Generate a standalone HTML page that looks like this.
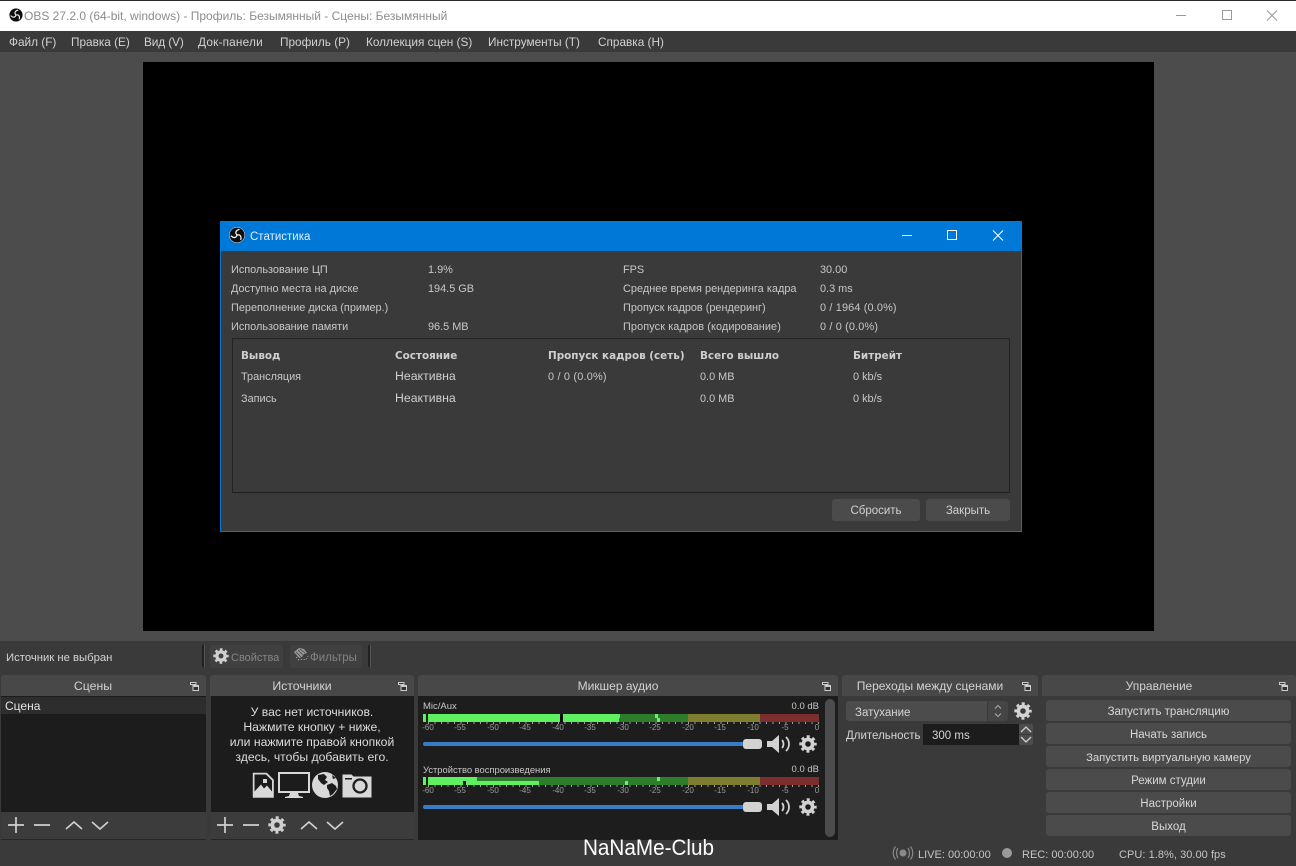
<!DOCTYPE html>
<html lang="ru"><head><meta charset="utf-8"><title>OBS 27.2.0</title>
<style>
html,body{margin:0;padding:0;width:1296px;height:866px;overflow:hidden;background:#3a3a3a}
body{position:relative;font-family:"Liberation Sans","Noto Sans CJK SC",sans-serif;font-size:12px;color:#d2d2d2}
.a{position:absolute}
.t{position:absolute;white-space:nowrap;line-height:16px;height:16px}
.c{transform:translateX(-50%)}
.title{position:absolute;top:675px;height:21px;background:#484848;border-radius:3px 3px 0 0}
.btn{position:absolute;left:1046px;width:245px;height:21px;background:#4b4b4b;border-radius:3px;text-align:center;line-height:23px;padding-top:0;color:#d8d8d8;font-size:11.5px}
.btn span{position:relative;top:1px}
.m{position:absolute;font-size:8px;color:#9c9c9c;line-height:10px;transform:translateX(-50%);white-space:nowrap}
svg{position:absolute;overflow:visible}
.b{font-family:"DejaVu Sans",sans-serif;font-weight:bold;font-size:10.4px;color:#cfcfcf}
.s{font-size:10.9px;color:#c8c8c8}
.mn{top:34px;font-size:11.8px}
.seg{position:absolute;height:3.5px}
</style></head><body>
<svg width="0" height="0" style="position:absolute"><defs>
<symbol id="gear" viewBox="0 0 24 24"><circle cx="12" cy="12" r="6.2" fill="none" stroke="currentColor" stroke-width="5"/><circle cx="12" cy="12" r="9.6" fill="none" stroke="currentColor" stroke-width="4" stroke-dasharray="3.9 3.64" stroke-dashoffset="1.95"/></symbol>
<symbol id="float" viewBox="0 0 9 9"><path d="M.5.5h5.5v2H.5zM3 3.5h5.5v5H3z" fill="#333" stroke="#ccc" stroke-width="1"/><path d="M3 4h5.5v1H3z" fill="#ccc"/></symbol>
<symbol id="logo" viewBox="0 0 32 32"><circle cx="16" cy="16" r="15.500" fill="#0e0e0e" stroke="#e8e8e8" stroke-width="1"/>
<g fill="none" stroke="#f0f0f0" stroke-width="2.600" stroke-linecap="round"><path d="M16 16C12 12 13 7 20 5"/><path d="M16 16C12 12 13 7 20 5" transform="rotate(120 16 16)"/><path d="M16 16C12 12 13 7 20 5" transform="rotate(240 16 16)"/></g></symbol>
</defs></svg>

<!-- title bar -->
<div class="a" style="left:0;top:0;width:1296px;height:1px;background:#2a2a2a"></div>
<div class="a" style="left:0;top:1px;width:1296px;height:30px;background:#fff"></div>
<svg style="left:9px;top:8px" width="14" height="14"><use href="#logo" width="14" height="14"/></svg>
<div class="t" style="left:24px;top:8px;color:#8c8c8c;font-size:12px">OBS 27.2.0 (64-bit, windows) - Профиль: Безымянный - Сцены: Безымянный</div>
<svg style="left:1176px;top:10px" width="100" height="12" fill="none" stroke="#999" stroke-width="1"><path d="M0 5.500h10M46.500 .5h9v9h-9zM91 .5l10 10M101 .5l-10 10"/></svg>

<!-- menu -->
<div class="a" style="left:0;top:31px;width:1296px;height:21px;background:#3a3a3a"></div>
<div class="t mn" style="left:9px">Файл (F)</div>
<div class="t mn" style="left:71px">Правка (E)</div>
<div class="t mn" style="left:144px;letter-spacing:-.1px">Вид (V)</div>
<div class="t mn" style="left:198px;letter-spacing:.2px">Док-панели</div>
<div class="t mn" style="left:280px">Профиль (P)</div>
<div class="t mn" style="left:366px">Коллекция сцен (S)</div>
<div class="t mn" style="left:488px">Инструменты (T)</div>
<div class="t mn" style="left:598px">Справка (H)</div>

<!-- main -->
<div class="a" style="left:0;top:52px;width:1296px;height:590px;background:#4c4c4c"></div>
<div class="a" style="left:143px;top:62px;width:1011px;height:569px;background:#000"></div>

<!-- stats dialog -->
<div class="a" style="left:220px;top:221px;width:800px;height:309px;background:#3a3a3a;border:1px solid #0078d7"></div>
<div class="a" style="left:220px;top:221px;width:802px;height:30px;background:#0078d7"></div>
<svg style="left:229px;top:227px" width="16" height="16"><use href="#logo" width="16" height="16"/></svg>
<div class="t" style="left:250px;top:229px;color:#e4eefa;font-size:11.5px">Статистика</div>
<svg style="left:902px;top:230px" width="102" height="12" fill="none" stroke="#fff" stroke-width="1"><path d="M0 5.500h10M45.500 .5h9v9h-9zM91 .5l10 10M101 .5l-10 10"/></svg>

<div class="t s" style="left:231px;top:262px">Использование ЦП</div>
<div class="t s" style="left:428px;top:262px">1.9%</div>
<div class="t s" style="left:231px;top:281px">Доступно места на диске</div>
<div class="t s" style="left:428px;top:281px">194.5 GB</div>
<div class="t s" style="left:231px;top:300px">Переполнение диска (пример.)</div>
<div class="t s" style="left:231px;top:319px">Использование памяти</div>
<div class="t s" style="left:428px;top:319px">96.5 MB</div>
<div class="t s" style="left:623px;top:262px">FPS</div>
<div class="t s" style="left:820px;top:262px">30.00</div>
<div class="t s" style="left:623px;top:281px;letter-spacing:.03px">Среднее время рендеринга кадра</div>
<div class="t s" style="left:820px;top:281px">0.3 ms</div>
<div class="t s" style="left:623px;top:300px">Пропуск кадров (рендеринг)</div>
<div class="t s" style="left:820px;top:300px;letter-spacing:.15px">0 / 1964 (0.0%)</div>
<div class="t s" style="left:623px;top:319px;letter-spacing:.1px">Пропуск кадров (кодирование)</div>
<div class="t s" style="left:820px;top:319px;letter-spacing:.15px">0 / 0 (0.0%)</div>

<div class="a" style="left:232px;top:338px;width:776px;height:153px;border:1px solid #232323;border-bottom-color:#1e1e1e"></div>
<div class="t b" style="left:241px;top:348px">Вывод</div>
<div class="t b" style="left:395px;top:348px">Состояние</div>
<div class="t b" style="left:548px;top:348px">Пропуск кадров (сеть)</div>
<div class="t b" style="left:700px;top:348px">Всего вышло</div>
<div class="t b" style="left:853px;top:348px">Битрейт</div>
<div class="t s" style="left:241px;top:369px">Трансляция</div>
<div class="t" style="left:395px;top:368px;font-size:12.3px;color:#cfcfcf">Неактивна</div>
<div class="t s" style="left:548px;top:369px;letter-spacing:.2px">0 / 0 (0.0%)</div>
<div class="t s" style="left:700px;top:369px">0.0 MB</div>
<div class="t s" style="left:853px;top:369px">0 kb/s</div>
<div class="t s" style="left:241px;top:391px">Запись</div>
<div class="t" style="left:395px;top:390px;font-size:12.3px;color:#cfcfcf">Неактивна</div>
<div class="t s" style="left:700px;top:391px">0.0 MB</div>
<div class="t s" style="left:853px;top:391px">0 kb/s</div>
<div class="a" style="left:832px;top:499px;width:88px;height:22px;background:#4b4b4b;border-radius:3px;text-align:center;line-height:23px;font-size:11.5px;color:#d0d0d0"><span style="position:relative;top:1px">Сбросить</span></div>
<div class="a" style="left:926px;top:499px;width:84px;height:22px;background:#4b4b4b;border-radius:3px;text-align:center;line-height:23px;font-size:11.5px;color:#d0d0d0"><span style="position:relative;top:1px">Закрыть</span></div>

<!-- context bar -->
<div class="a" style="left:0;top:641px;width:1296px;height:225px;background:#3a3a3a"></div>
<div class="t" style="left:6px;top:650px;font-size:11.3px;color:#d4d4d4">Источник не выбран</div>
<div class="a" style="left:202px;top:645px;width:2px;height:22px;background:#222;border-right:1px solid #555"></div>
<div class="a" style="left:210px;top:645px;width:73px;height:23px;background:#404040;border-radius:3px"></div>
<svg style="left:213px;top:648px;color:#cfcfcf" width="16" height="16"><use href="#gear" width="16" height="16"/></svg>
<div class="t" style="left:231px;top:650px;color:#858585;font-size:11px">Свойства</div>
<div class="a" style="left:290px;top:645px;width:72px;height:23px;background:#404040;border-radius:3px"></div>
<svg style="left:293px;top:647px" width="16" height="17" fill="#9a9a9a"><path d="M1 5L6 1l5 1 3 4-3 1-2 3-3 1z"/><path d="M3 10l3 3 4-1 3 1 2-4" fill="none" stroke="#9a9a9a" stroke-dasharray="1.500 1.500"/><path d="M5 3l5 5M3 5l5 5M7 2l5 4" stroke="#404040" stroke-width=".8"/></svg>
<div class="t" style="left:310px;top:650px;color:#858585;font-size:11.5px">Фильтры</div>
<div class="a" style="left:368px;top:645px;width:2px;height:22px;background:#222;border-right:1px solid #555"></div>

<!-- scenes -->
<div class="title" style="left:1px;width:205px"></div>
<div class="t c" style="left:93px;top:678px;font-size:12.3px">Сцены</div>
<svg style="left:190px;top:682px" width="9" height="9"><use href="#float" width="9" height="9"/></svg>
<div class="a" style="left:1px;top:696px;width:205px;height:116px;background:#1c1c1c"></div>
<div class="a" style="left:1px;top:697px;width:205px;height:17px;background:#2d2d2d"></div>
<div class="t" style="left:5px;top:698px;color:#e4e4e4">Сцена</div>
<div class="a" style="left:1px;top:812px;width:205px;height:27px;background:#3c3c3c;border-bottom:1px solid #262626"></div>
<svg style="left:8px;top:817px" width="100" height="16" fill="none" stroke="#cfcfcf" stroke-width="1.700"><path d="M8 0v16M0 8h16M26 8h16M58 12l8-7 8 7M84 5l8 7 8-7"/></svg>

<!-- sources -->
<div class="title" style="left:210px;width:204px"></div>
<div class="t c" style="left:302px;top:678px;font-size:12.3px">Источники</div>
<svg style="left:398px;top:682px" width="9" height="9"><use href="#float" width="9" height="9"/></svg>
<div class="a" style="left:211px;top:696px;width:203px;height:116px;background:#1c1c1c"></div>
<div class="t c" style="left:312px;top:704px;color:#dcdcdc;font-size:12.2px">У вас нет источников.</div>
<div class="t c" style="left:312px;top:719px;color:#dcdcdc;font-size:12.2px">Нажмите кнопку + ниже,</div>
<div class="t c" style="left:312px;top:734px;color:#dcdcdc;font-size:12.2px">или нажмите правой кнопкой</div>
<div class="t c" style="left:312px;top:749px;color:#dcdcdc;font-size:12.2px">здесь, чтобы добавить его.</div>
<svg style="left:252px;top:772px" width="122" height="27">
<path d="M.8 .8h14l7 7v18H.8z" fill="#d8d8d8"/><path d="M2.500 2.500h11.500l6 6v11l-5-6-3 3-3-4-6.500 7z" fill="#1c1c1c"/><rect x="11" y="7" width="4" height="4" fill="#d8d8d8"/>
<rect x="27" y="1" width="30" height="19" fill="none" stroke="#d8d8d8" stroke-width="2"/><path d="M38 21h8l1 3 4 1v1H33v-1l4-1z" fill="#d8d8d8"/>
<circle cx="73" cy="13" r="13" fill="#d8d8d8"/><path d="M66 3l6-1 3 3-2 3 3 2-4 3-3-2-3-4zM75 13l5-2 4 3 1 3-4 5-3 2-1-5-2-3zM80 3l4 3-3 1z" fill="#1c1c1c"/>
<path d="M90.500 4v-1.500h9l2 2h18v21h-29z" fill="#d8d8d8"/><circle cx="108" cy="14" r="6.500" fill="#d8d8d8" stroke="#1c1c1c" stroke-width="2.300"/><rect x="93" y="6" width="7" height="1.500" fill="#1c1c1c"/>
</svg>
<div class="a" style="left:211px;top:812px;width:203px;height:27px;background:#3c3c3c;border-bottom:1px solid #262626"></div>
<svg style="left:217px;top:817px" width="126" height="16" fill="none" stroke="#cfcfcf" stroke-width="1.700"><path d="M8 0v16M0 8h16M26 8h16M84 12l8-7 8 7M110 5l8 7 8-7"/></svg>
<svg style="left:268px;top:816px;color:#cfcfcf" width="18" height="18"><use href="#gear" width="18" height="18"/></svg>

<!-- mixer -->
<div class="title" style="left:418px;width:420px"></div>
<div class="t c" style="left:618px;top:678px;font-size:12px">Микшер аудио</div>
<svg style="left:822px;top:682px" width="9" height="9"><use href="#float" width="9" height="9"/></svg>
<div class="a" style="left:418px;top:696px;width:420px;height:144px;background:#1d1d1d"></div>
<div class="a" style="left:825px;top:699px;width:10px;height:138px;background:#4c4c4c;border-radius:5px"></div>

<div class="t" style="left:423px;top:699px;font-size:9.5px;color:#c8c8c8">Mic/Aux</div>
<div class="t" style="right:477px;top:699px;font-size:9.5px;color:#c8c8c8">0.0 dB</div>
<div class="seg" style="left:423px;top:714px;width:3px;background:#62f062"></div><div class="seg" style="left:423px;top:718px;width:3px;background:#62f062"></div>
<div class="seg" style="left:428px;top:714px;width:391px;height:3.500px;background:linear-gradient(90deg,#5ef05e 0,#5ef05e 192px,#2d7d2d 192px,#2d7d2d 260px,#7e7e30 260px,#7e7e30 332px,#7c2e2e 332px)"></div>
<div class="seg" style="left:428px;top:718px;width:391px;height:3.500px;background:linear-gradient(90deg,#5ef05e 0,#5ef05e 191px,#2d7d2d 191px,#2d7d2d 260px,#7e7e30 260px,#7e7e30 332px,#7c2e2e 332px)"></div>
<div class="a" style="left:560px;top:714px;width:3px;height:8px;background:#0c0c0c"></div>
<div class="a" style="left:655px;top:714px;width:3px;height:3.500px;background:#6cf06c"></div>
<div class="a" style="left:657px;top:718px;width:3px;height:3.500px;background:#6cf06c"></div>
<div class="a" style="left:428px;top:722px;width:391px;height:2px;background:repeating-linear-gradient(90deg,#a0a0a0 0,#a0a0a0 1px,transparent 1px,transparent 6.5px)"></div>
<div class="m" style="left:428px;top:723px">-60</div><div class="m" style="left:460px;top:723px">-55</div><div class="m" style="left:493px;top:723px">-50</div><div class="m" style="left:525px;top:723px">-45</div><div class="m" style="left:558px;top:723px">-40</div><div class="m" style="left:590px;top:723px">-35</div><div class="m" style="left:623px;top:723px">-30</div><div class="m" style="left:655px;top:723px">-25</div><div class="m" style="left:688px;top:723px">-20</div><div class="m" style="left:720px;top:723px">-15</div><div class="m" style="left:753px;top:723px">-10</div><div class="m" style="left:785px;top:723px">-5</div><div class="m" style="left:817px;top:723px">0</div>
<div class="a" style="left:423px;top:742px;width:322px;height:4px;background:#3a7bc8;border-radius:2px"></div>
<div class="a" style="left:743px;top:739px;width:19px;height:10px;background:#d2d2d2;border-radius:3px"></div>
<svg style="left:767px;top:735px" width="24" height="18" fill="#d2d2d2"><path d="M0 6h5l7-6v18l-7-6H0z"/><path d="M15 5c2 2 2 6 0 8M19 2c4 4 4 10 0 14" fill="none" stroke="#d2d2d2" stroke-width="1.800"/></svg>
<svg style="left:799px;top:735px;color:#d2d2d2" width="18" height="18"><use href="#gear" width="18" height="18"/></svg>

<div class="t" style="left:423px;top:762px;font-size:9.4px;color:#c8c8c8">Устройство воспроизведения</div>
<div class="t" style="right:477px;top:762px;font-size:9.5px;color:#c8c8c8">0.0 dB</div>
<div class="seg" style="left:423px;top:777px;width:3px;background:#62f062"></div><div class="seg" style="left:423px;top:781px;width:3px;background:#62f062"></div>
<div class="seg" style="left:428px;top:777px;width:391px;height:3.500px;background:linear-gradient(90deg,#5ef05e 0,#5ef05e 49px,#2d7d2d 49px,#2d7d2d 260px,#7e7e30 260px,#7e7e30 332px,#7c2e2e 332px)"></div>
<div class="seg" style="left:428px;top:781px;width:391px;height:3.500px;background:linear-gradient(90deg,#5ef05e 0,#5ef05e 111px,#2d7d2d 111px,#2d7d2d 260px,#7e7e30 260px,#7e7e30 332px,#7c2e2e 332px)"></div>
<div class="a" style="left:463px;top:781px;width:3px;height:3.500px;background:#0c0c0c"></div>
<div class="a" style="left:657px;top:777px;width:3px;height:3.500px;background:#6cf06c"></div>
<div class="a" style="left:625px;top:781px;width:3px;height:3.500px;background:#6cf06c"></div>
<div class="a" style="left:428px;top:785px;width:391px;height:2px;background:repeating-linear-gradient(90deg,#a0a0a0 0,#a0a0a0 1px,transparent 1px,transparent 6.5px)"></div>
<div class="m" style="left:428px;top:786px">-60</div><div class="m" style="left:460px;top:786px">-55</div><div class="m" style="left:493px;top:786px">-50</div><div class="m" style="left:525px;top:786px">-45</div><div class="m" style="left:558px;top:786px">-40</div><div class="m" style="left:590px;top:786px">-35</div><div class="m" style="left:623px;top:786px">-30</div><div class="m" style="left:655px;top:786px">-25</div><div class="m" style="left:688px;top:786px">-20</div><div class="m" style="left:720px;top:786px">-15</div><div class="m" style="left:753px;top:786px">-10</div><div class="m" style="left:785px;top:786px">-5</div><div class="m" style="left:817px;top:786px">0</div>
<div class="a" style="left:423px;top:805px;width:322px;height:4px;background:#3a7bc8;border-radius:2px"></div>
<div class="a" style="left:743px;top:802px;width:19px;height:10px;background:#d2d2d2;border-radius:3px"></div>
<svg style="left:767px;top:798px" width="24" height="18" fill="#d2d2d2"><path d="M0 6h5l7-6v18l-7-6H0z"/><path d="M15 5c2 2 2 6 0 8M19 2c4 4 4 10 0 14" fill="none" stroke="#d2d2d2" stroke-width="1.800"/></svg>
<svg style="left:799px;top:798px;color:#d2d2d2" width="18" height="18"><use href="#gear" width="18" height="18"/></svg>

<!-- transitions -->
<div class="title" style="left:842px;width:196px"></div>
<div class="t c" style="left:930px;top:678px;font-size:12px">Переходы между сценами</div>
<svg style="left:1022px;top:682px" width="9" height="9"><use href="#float" width="9" height="9"/></svg>
<div class="a" style="left:846px;top:701px;width:141px;height:20px;background:#4c4c4c;border-radius:3px 0 0 3px"></div>
<div class="a" style="left:988px;top:701px;width:20px;height:20px;background:#454545;border-radius:0 3px 3px 0"></div>
<svg style="left:994px;top:704px" width="8" height="14" fill="none" stroke="#aaa"><path d="M1 4.500l3-3 3 3M1 9.500l3 3 3-3"/></svg>
<div class="t" style="left:855px;top:704px;font-size:11.5px;line-height:18px;color:#d4d4d4">Затухание</div>
<svg style="left:1014px;top:702px;color:#d2d2d2" width="18" height="18"><use href="#gear" width="18" height="18"/></svg>
<div class="t" style="left:846px;top:728px;font-size:11.5px;color:#d4d4d4">Длительность</div>
<div class="a" style="left:923px;top:724px;width:96px;height:21px;background:#1c1c1c"></div>
<div class="t" style="left:932px;top:728px;font-size:11.5px;color:#d4d4d4">300 ms</div>
<div class="a" style="left:1019px;top:724px;width:14px;height:10px;background:#4c4c4c;border-radius:2px 2px 0 0"></div>
<div class="a" style="left:1019px;top:735px;width:14px;height:10px;background:#4c4c4c;border-radius:0 0 2px 2px"></div>
<svg style="left:1020px;top:725px" width="12" height="19" fill="none" stroke="#d2d2d2" stroke-width="1.300"><path d="M1 7l5-5 5 5M1 12l5 5 5-5"/></svg>

<!-- controls -->
<div class="title" style="left:1042px;width:254px"></div>
<div class="t c" style="left:1159px;top:678px;font-size:12px">Управление</div>
<svg style="left:1279px;top:682px" width="9" height="9"><use href="#float" width="9" height="9"/></svg>
<div class="btn" style="top:700px"><span>Запустить трансляцию</span></div>
<div class="btn" style="top:723px"><span>Начать запись</span></div>
<div class="btn" style="top:746px;font-size:11.3px"><span>Запустить виртуальную камеру</span></div>
<div class="btn" style="top:769px"><span>Режим студии</span></div>
<div class="btn" style="top:792px"><span>Настройки</span></div>
<div class="btn" style="top:815px"><span>Выход</span></div>

<!-- status bar -->
<svg style="left:893px;top:846px" width="20" height="14" fill="none" stroke="#8a8a8a" stroke-width="1.200"><circle cx="10" cy="7" r="3.500" fill="#8a8a8a" stroke="none"/><path d="M5 2c-2 3-2 7 0 10M2.500 .5c-3 4-3 9 0 13M15 2c2 3 2 7 0 10M17.500 .5c3 4 3 9 0 13"/></svg>
<div class="t" style="left:918px;top:847px;font-size:11px;color:#c4c4c4">LIVE: 00:00:00</div>
<div class="a" style="left:1002px;top:848px;width:10px;height:10px;border-radius:50%;background:#9a9a9a"></div>
<div class="t" style="left:1022px;top:847px;font-size:11px;color:#c4c4c4">REC: 00:00:00</div>
<div class="t" style="left:1119px;top:847px;font-size:11px;letter-spacing:.05px;color:#c4c4c4">CPU: 1.8%, 30.00 fps</div>

<!-- watermark -->
<svg style="left:582px;top:836px" width="134" height="24"><text x="1" y="19" font-family="Liberation Sans, sans-serif" font-size="22" fill="#fff" textLength="131" lengthAdjust="spacingAndGlyphs">NaNaMe-Club</text></svg>
</body></html>
